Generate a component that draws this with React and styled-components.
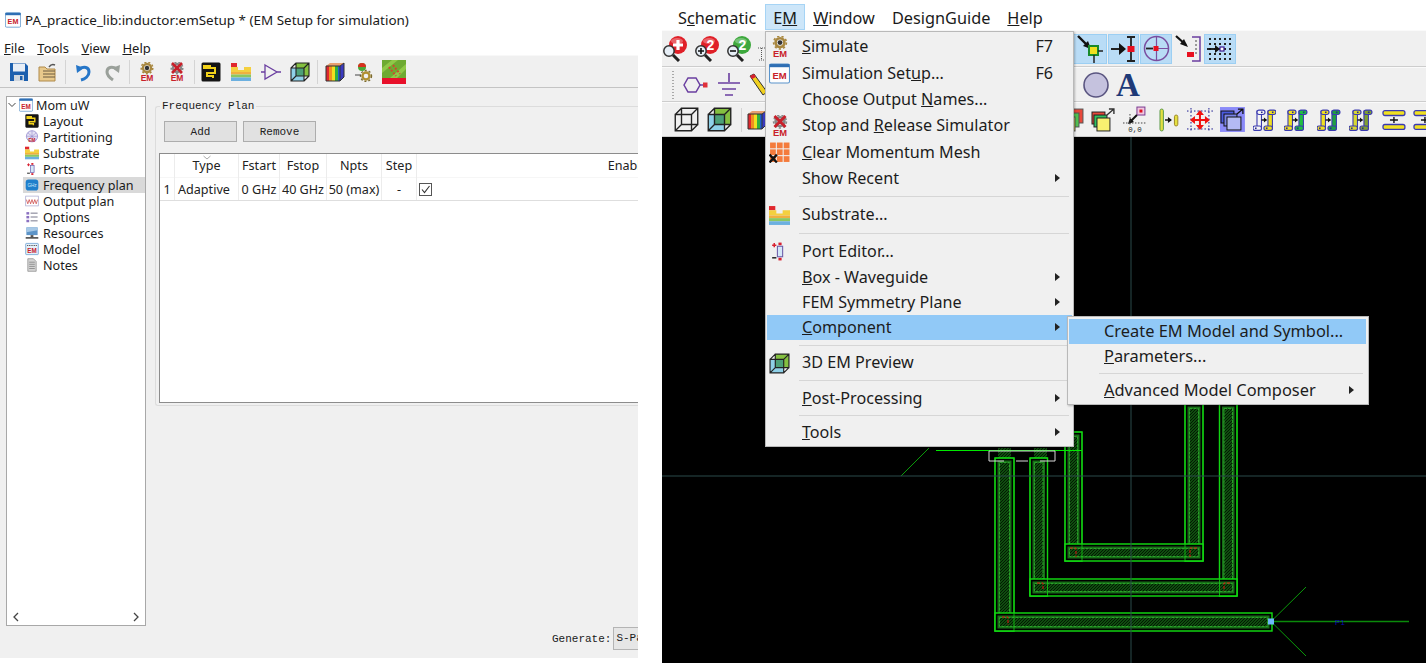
import React from 'react'
import styled, { createGlobalStyle } from 'styled-components'

const GlobalStyle = createGlobalStyle`
html, body {
  margin: 0;
  padding: 0;
  background: #fff;
  overflow: hidden;
}
#root {
  width: 1426px;
  height: 663px;
}
`

const UI_FONT = `"Noto Sans", "Open Sans", sans-serif`
const MONO_FONT = `"Liberation Mono", monospace`

const Page = styled.div`
display: flex;
width: 1426px;
height: 663px;
gap: 24px;
font-family: ${UI_FONT};
color: #1a1a1a;
overflow: hidden;
`

/* left window */
const LeftWindow = styled.div`
display: flex;
flex-direction: column;
width: 638px;
height: 658px;
overflow: hidden;
`
const TitleBar = styled.div`
display: flex;
align-items: center;
gap: 4px;
height: 40px;
padding-left: 5px;
font-size: 13.45px;
white-space: nowrap;
`
const LeftMenuBar = styled.div`
display: flex;
align-items: center;
gap: 12.5px;
height: 15px;
padding-left: 4px;
font-size: 13px;
`
const LeftToolbar = styled.div`
display: flex;
align-items: center;
height: 33px;
padding-left: 4px;
background: #f0f0f0;
border-top: 1px solid #f8f8f8;
border-bottom: 1px solid #c4c4c4;
box-sizing: border-box;
`
const ToolSlot = styled.div`
display: flex;
align-items: center;
justify-content: center;
flex: none;
width: 29.6px;
`
const ToolSep = styled.div`
flex: none;
width: 1px;
height: 24px;
margin: 0 2px;
background: #d4d4d4;
`
const Body = styled.div`
flex: 1;
display: flex;
min-height: 0;
padding: 8px 0 0 6px;
gap: 9px;
background: #f0f0f0;
`
const TreePanel = styled.div`
flex: none;
display: flex;
flex-direction: column;
width: 140px;
height: 530px;
box-sizing: border-box;
background: #fff;
border: 1px solid #a8a8a8;
font-size: 12.6px;
`
const TreeList = styled.div`
flex: 1;
`
const TreeRow = styled.div`
display: flex;
align-items: center;
height: 16px;
gap: ${({ $root }) => ($root ? 3 : 4)}px;
margin-left: ${({ $root }) => ($root ? 0 : 16)}px;
padding-left: ${({ $root }) => ($root ? 0 : 2)}px;
background: ${({ $selected }) => ($selected ? '#d9d9d9' : 'transparent')};
white-space: nowrap;
`
const TreeScroll = styled.div`
display: flex;
align-items: center;
justify-content: space-between;
height: 17px;
padding: 0 5px;
`
const Content = styled.div`
flex: 1;
min-width: 0;
display: flex;
flex-direction: column;
padding-top: 2px;
overflow: hidden;
`
const Group = styled.fieldset`
margin: 0;
height: 308px;
box-sizing: border-box;
padding: 7px 0 0 3px;
border: 1px solid #dcdcdc;
border-right: none;
border-radius: 3px 0 0 3px;
min-width: 0;
`
const GroupLabel = styled.legend`
margin-left: 1px;
padding: 0 2px;
font-family: ${MONO_FONT};
font-size: 11px;
line-height: 16px;
`
const ButtonRow = styled.div`
display: flex;
gap: 6px;
padding-left: 5px;
`
const PlanButton = styled.button`
width: 73px;
height: 21px;
padding: 0;
background: #e1e1e1;
border: 1px solid #adadad;
font-family: ${MONO_FONT};
font-size: 11px;
color: #222;
`
const TableBox = styled.div`
height: 250px;
margin-top: 11px;
box-sizing: border-box;
background: #fff;
border: 1px solid #8c8c8c;
border-right: none;
overflow: hidden;
`
const PlanTable = styled.table`
table-layout: fixed;
width: 687px;
border-collapse: collapse;
font-size: 12.6px;
color: #222;
`
const HeadCell = styled.th`
position: relative;
height: 23px;
padding: 0;
width: ${({ $w }) => $w}px;
font-weight: 400;
text-align: center;
border-right: 1px solid #ececec;
`
const SortMark = styled.svg`
position: absolute;
top: 1px;
left: 50%;
margin-left: -4px;
`
const BodyCell = styled.td`
height: 22px;
padding: 0;
text-align: center;
white-space: nowrap;
border-right: 1px solid #ececec;
border-top: 1px solid #f6f6f6;
border-bottom: 1px solid #dedede;
`
const TypeCell = styled(BodyCell)`
padding-left: 3px;
text-align: left;
`
const CheckCell = styled(BodyCell)`
padding-left: 2px;
text-align: left;
border-right: none;
`
const CheckBox = styled.span`
display: flex;
align-items: center;
justify-content: center;
width: 13px;
height: 13px;
box-sizing: border-box;
border: 1px solid #555;
`
const Footer = styled.div`
display: flex;
align-items: center;
margin-top: 221px;
margin-left: 397px;
font-family: ${MONO_FONT};
font-size: 11px;
white-space: nowrap;
`
const Select = styled.div`
flex: none;
width: 60px;
height: 23px;
margin-left: 2px;
padding-left: 2px;
box-sizing: border-box;
line-height: 21px;
background: #e6e6e6;
border: 1px solid #b4b4b4;
`

/* right window */
const RightWindow = styled.div`
position: relative;
flex: none;
display: flex;
flex-direction: column;
width: 764px;
height: 663px;
`
const RightMenuBar = styled.div`
display: flex;
align-items: flex-end;
height: 30px;
padding-left: 8px;
font-size: 16.3px;
`
const BarItem = styled.div`
display: flex;
align-items: center;
justify-content: center;
box-sizing: border-box;
height: 26px;
margin-right: ${({ $mr }) => $mr || 0}px;
padding: 1px 7px 0;
white-space: nowrap;
background: ${({ $open }) => ($open ? '#cde6f9' : 'transparent')};
border: 1px solid ${({ $open }) => ($open ? '#a6d4f5' : 'transparent')};
`
const ToolRow = styled.div`
display: flex;
align-items: center;
flex: none;
height: ${({ $h }) => $h}px;
box-sizing: border-box;
gap: ${({ $gap }) => $gap || 0}px;
background: #f0f0f0;
border-bottom: 1px solid #cdcdcd;
border-top: 1px solid #fafafa;
overflow: hidden;
`
const Spacer = styled.div`
flex: none;
width: ${({ $w }) => $w}px;
`
const ToolButton = styled.div`
display: flex;
align-items: center;
justify-content: center;
flex: none;
width: ${({ $w }) => $w}px;
height: 30px;
margin-left: ${({ $ml }) => $ml || 0}px;
box-sizing: border-box;
background: ${({ $on }) => ($on ? '#b9dcf6' : 'transparent')};
border: 1px solid ${({ $on }) => ($on ? '#9ccff3' : 'transparent')};
`
const Grip = styled.div`
flex: none;
width: 2px;
height: 28px;
margin-left: 10px;
background: repeating-linear-gradient(to bottom, #a8a8a8 0 1px, transparent 1px 3px);
`
const Canvas = styled.svg`
display: block;
flex: 1;
min-height: 0;
width: 764px;
background: #000;
`
const Menu = styled.div`
position: absolute;
left: 103px;
top: 31px;
width: 309px;
height: 416px;
box-sizing: border-box;
padding: 2px 1px 0;
background: #f0f0f0;
border: 1px solid #b9b9b9;
box-shadow: 1px 1px 2px rgba(0, 0, 0, 0.25);
font-size: 16.15px;
color: #1c1c1c;
`
const SubMenu = styled(Menu)`
left: 301px;
top: 284px;
width: 302px;
height: 89px;
padding: 2px 2px 0 1px;
font-size: 16.4px;
`
const MenuRow = styled.div`
display: grid;
grid-template-columns: ${({ $icon }) => $icon}px 1fr auto 12px;
align-items: center;
box-sizing: border-box;
height: ${({ $h }) => $h}px;
padding-right: ${({ $pr }) => $pr}px;
padding-bottom: 2px;
background: ${({ $active }) => ($active ? '#91c9f7' : 'transparent')};
white-space: nowrap;
`
const RowIcon = styled.div`
display: flex;
align-items: center;
margin-top: 2px;
padding-left: 2px;
`
const Shortcut = styled.span`
margin-right: -2px;
`
const Arrow = styled.span`
justify-self: center;
width: 0;
height: 0;
border-top: 4px solid transparent;
border-bottom: 4px solid transparent;
border-left: 5px solid #222;
`
const MenuSep = styled.div`
height: 1px;
margin: ${({ $t }) => $t}px 3px ${({ $b }) => $b}px ${({ $l }) => $l || 32}px;
background: #d6d6d6;
`
const BigA = styled.span`
font-family: "Liberation Serif", serif;
font-size: 33px;
font-weight: 700;
line-height: 30px;
color: #1e3a78;
`

/* "&" marks the letter a menu underlines */
const Mn = ({ t }) => {
    const i = t.indexOf('&')
    if (i < 0) return <span>{t}</span>
    return <span>{t.slice(0, i)}<u>{t[i + 1]}</u>{t.slice(i + 2)}</span>
}

const Ico = ({ s = 20, children }) => (
    <svg width={s} height={s} viewBox="0 0 20 20" style={{ display: 'block', flex: 'none' }}>{children}</svg>
)

const EmLetters = ({ y = 19, size = 8.5, fill = '#c8202a', x = 10 }) => (
    <text x={x} y={y} textAnchor="middle" fontFamily="Liberation Sans, sans-serif" fontWeight="700" fontSize={size} fill={fill}>EM</text>
)
const Gear = ({ cx = 10, cy = 6, r = 4, c = '#a8873f' }) => (
    <g>
        <circle cx={cx} cy={cy} r={r} fill="none" stroke={c} strokeWidth="2.4" />
        <circle cx={cx} cy={cy} r={r + 1.8} fill="none" stroke={c} strokeWidth="1.5" strokeDasharray="2 2" />
        <circle cx={cx} cy={cy} r={r - 1.8} fill="#333" />
    </g>
)
const SaveIcon = () => (
    <Ico>
        <path d="M1 1h15l3 3v15H1z" fill="#1c5fae" />
        <rect x="4" y="1.5" width="12" height="8" fill="#e8eef6" />
        <rect x="5" y="13" width="10" height="6" fill="#cfd6de" />
        <rect x="11" y="14" width="2.5" height="4" fill="#1c5fae" />
    </Ico>
)
const OpenIcon = () => (
    <Ico>
        <path d="M1 5h6l2 2h8v12H1z" fill="#e8c98c" stroke="#b08a4a" />
        <path d="M5 9h12M5 12h12M5 15h12" stroke="#6a5a40" />
        <path d="M11 5c2-3 4-3 6-2" fill="none" stroke="#555" strokeWidth="1.4" />
    </Ico>
)
const UndoIcon = () => (
    <Ico>
        <path d="M3 3l1 8 7-5z" fill="#2676c8" />
        <path d="M6 7c5-3 10-2 10 3 0 4-4 7-8 8" fill="none" stroke="#2676c8" strokeWidth="3" />
    </Ico>
)
const RedoIcon = () => (
    <Ico>
        <path d="M17 3l-1 8-7-5z" fill="#9aa09a" />
        <path d="M14 7C9 4 4 5 4 10c0 4 3 6 6 8" fill="none" stroke="#9aa09a" strokeWidth="3" />
    </Ico>
)
const EmGearIcon = ({ s }) => (
    <Ico s={s}><Gear /><EmLetters /></Ico>
)
const EmStopIcon = ({ s }) => (
    <Ico s={s}>
        <Gear c="#888" />
        <path d="M5 1l10 10M15 1L5 11" stroke="#c8202a" strokeWidth="2.6" />
        <EmLetters />
    </Ico>
)
const LayoutIcon = ({ s }) => (
    <Ico s={s}>
        <rect x="0.5" y="0.5" width="19" height="19" rx="1.5" fill="#141414" />
        <path d="M3 4h6v2H3zM9 6h5v5H6v3h6v2" fill="none" stroke="#f2d21a" strokeWidth="2" />
    </Ico>
)
const SubstrateIcon = ({ s }) => (
    <Ico s={s}>
        <rect x="0" y="1" width="6" height="4" fill="#e0282e" />
        <path d="M0 5h7v3h6V5h7v5H0z" fill="#f4d03f" />
        <rect x="0" y="10" width="20" height="2.5" fill="#f0b040" />
        <rect x="0" y="12.5" width="20" height="3" fill="#8cc860" />
        <rect x="0" y="15.5" width="20" height="3.5" fill="#6cb0e0" />
    </Ico>
)
const TriangleIcon = () => (
    <Ico>
        <path d="M4 3l12 7-12 7zM0 10h4M16 10h4" fill="none" stroke="#6a3ea0" strokeWidth="1.3" />
    </Ico>
)
const BoxIcon = ({ s, fill }) => (
    <Ico s={s}>
        {fill && <path d="M1 6h13v13H1z" fill="#8ed0e8" />}
        {fill && <path d="M6 1h13v13H6z" fill="#84c040" />}
        {fill && <path d="M6 6h8v8H6z" fill="#4ca078" />}
        <path d="M1 6h13v13H1zM6 1h13v13H6zM1 6l5-5M14 6l5-5M1 19l5-5M14 19l5-5" fill="none" stroke="#222" strokeWidth="1.1" />
    </Ico>
)
const RainbowIcon = () => (
    <Ico>
        <rect x="1" y="4" width="3" height="15" fill="#e0282e" />
        <rect x="4" y="4" width="3" height="15" fill="#f09020" />
        <rect x="7" y="4" width="3" height="15" fill="#f0e020" />
        <rect x="10" y="4" width="3" height="15" fill="#30b040" />
        <rect x="13" y="4" width="2" height="15" fill="#2060d0" />
        <path d="M15 4l4-3v14l-4 4z" fill="#3a3ac0" />
        <path d="M1 4l4-3h14l-4 3z" fill="#e8a070" />
        <path d="M1 4h14v15H1zM15 4l4-3v14l-4 4" fill="none" stroke="#333" />
    </Ico>
)
const BulbGearIcon = () => (
    <Ico>
        <circle cx="8" cy="5" r="4" fill="#4aa838" />
        <path d="M4 5a4 4 0 0 1 8 0z" fill="#d83020" />
        <circle cx="12" cy="14" r="3.5" fill="none" stroke="#b09030" strokeWidth="2.4" />
        <circle cx="12" cy="14" r="5.5" fill="none" stroke="#7a6a30" strokeWidth="1.4" strokeDasharray="2 2" />
        <path d="M1 13h6" stroke="#444" />
    </Ico>
)
const PhotoIcon = () => (
    <svg width="24" height="24" viewBox="0 0 24 24" style={{ display: 'block', flex: 'none' }}>
        <rect width="24" height="18" fill="#6eaa32" />
        <path d="M0 8L10 0h6L0 13zM8 18L24 4v5L15 18z" fill="#90c848" />
        <path d="M7 7l7 9M11 5l7 9" stroke="#d04830" strokeWidth="2" strokeDasharray="2 1.5" />
        <rect y="18" width="24" height="6" fill="#e8102a" />
    </svg>
)
const EmWinIcon = ({ s }) => (
    <Ico s={s}>
        <rect x="0.5" y="1" width="19" height="18" rx="1.5" fill="#fdfdfd" stroke="#5a94cc" />
        <rect x="0.5" y="1" width="19" height="3" fill="#2f6fb4" />
        <EmLetters y="15" size="9" />
    </Ico>
)
const MeshIcon = ({ s }) => (
    <Ico s={s}>
        {[1, 7.5, 14].map(x => [0.5, 7, 13.5].map(y => <rect key={`${x}${y}`} x={x} y={y} width="5.5" height="5.5" fill="#f47b3c" />))}
        <path d="M0.5 12l7 7.5M7.5 12l-7 7.5" stroke="#111" strokeWidth="2.2" />
    </Ico>
)
const PortIcon = ({ s }) => (
    <Ico s={s}>
        <rect x="8" y="5" width="5" height="10" fill="#d5e8f8" stroke="#6a5aa8" />
        <rect x="9" y="1.5" width="3" height="2.5" fill="#d82030" />
        <rect x="9" y="16" width="3" height="2.5" fill="#d82030" />
        <path d="M3 4h4M5 2v4" stroke="#d82030" strokeWidth="1.4" />
        <path d="M3 16h4" stroke="#222" strokeWidth="1.4" />
    </Ico>
)
const PartitionIcon = ({ s }) => (
    <Ico s={s}>
        <circle cx="10" cy="9" r="8" fill="#e2e0f4" stroke="#8a80c8" />
        <path d="M2 9h16M10 1v16M4 4l12 10M16 4L4 14" stroke="#8a80c8" strokeWidth="0.7" />
        <EmLetters y="17" size="6.5" />
    </Ico>
)
const GhzIcon = ({ s }) => (
    <Ico s={s}>
        <rect x="1" y="2" width="18" height="16" rx="4" fill="#1f7fcc" />
        <text x="10" y="13" textAnchor="middle" fontFamily="Liberation Sans, sans-serif" fontSize="6.6" fill="#cfe8fa">GHz</text>
    </Ico>
)
const OutputIcon = ({ s }) => (
    <Ico s={s}>
        <rect x="1" y="3" width="18" height="14" fill="#fff" stroke="#a6a6cf" />
        <path d="M2 8l2 6 2-6 2 6 2-6 2 6 2-6 2 6 2-6" fill="none" stroke="#c83a3a" />
    </Ico>
)
const OptionsIcon = ({ s }) => (
    <Ico s={s}>
        {[3, 8.5, 14].map(y => <rect key={y} x="2" y={y} width="4" height="3.5" fill="#8a70c0" />)}
        <path d="M8 4.5h10M8 10h10M8 15.5h10" stroke="#6a6a80" strokeWidth="1.3" />
    </Ico>
)
const ResourcesIcon = ({ s }) => (
    <Ico s={s}>
        <rect x="2" y="2" width="16" height="11" fill="#5c94c8" />
        <path d="M2 2h16v4L2 9z" fill="#a6c8e6" />
        <rect x="8" y="13" width="4" height="3" fill="#555" />
        <rect x="1" y="16" width="18" height="2" fill="#333" />
    </Ico>
)
const ModelIcon = ({ s }) => (
    <Ico s={s}>
        <rect x="1" y="2" width="18" height="16" rx="1" fill="#e4f1fb" stroke="#5a94cc" />
        <path d="M3 5h14" stroke="#555" strokeDasharray="1.5 1" strokeWidth="1.6" />
        <EmLetters y="16" size="9" />
    </Ico>
)
const NotesIcon = ({ s }) => (
    <Ico s={s}>
        <path d="M4 1h8l4 4v14H4z" fill="#d4d4d4" stroke="#8a8a8a" />
        <path d="M6 6h8M6 9h8M6 12h8M6 15h8" stroke="#777" />
    </Ico>
)
const ZoomIcon = ({ ball, label, sign }) => (
    <svg width="25" height="26" viewBox="0 0 25 26" style={{ display: 'block' }}>
        <circle cx="16" cy="9" r="9" fill={ball} />
        <ellipse cx="15" cy="5" rx="6" ry="3" fill="#fff" opacity="0.3" />
        {label
            ? <text x="16.5" y="14" textAnchor="middle" fontFamily="Liberation Sans, sans-serif" fontWeight="700" fontSize="14" fill="#fff">{label}</text>
            : <path d="M11 9h10M16 4v10" stroke="#fff" strokeWidth="3.2" />}
        <circle cx="7" cy="15" r="5.2" fill="#e6eef6" stroke="#333" strokeWidth="1.5" />
        {sign && <path d={sign === '+' ? 'M4 15h6M7 12v6' : 'M4 15h6'} stroke="#111" strokeWidth="1.6" />}
        <path d="M11 19l6 6" stroke="#222" strokeWidth="3" />
    </svg>
)
const DottedTee = () => (
    <svg width="7" height="14" viewBox="0 0 7 14" style={{ display: 'block', marginTop: 10 }}>
        <path d="M0 1h7M3.5 1v12M1 13h5" stroke="#555" strokeDasharray="1 1" />
    </svg>
)
const HexPortIcon = () => (
    <svg width="26" height="20" viewBox="0 0 26 20" style={{ display: 'block' }}>
        <path d="M2 10l4-7h8l4 7-4 7H6z" fill="none" stroke="#6a3ea0" strokeWidth="1.5" />
        <path d="M18 10h4" stroke="#6a3ea0" strokeWidth="1.5" />
        <rect x="21" y="7.5" width="4.5" height="5" fill="#e0303a" />
    </svg>
)
const GroundIcon = () => (
    <svg width="22" height="24" viewBox="0 0 22 24" style={{ display: 'block' }}>
        <path d="M11 0v9M0 10h22M4 16h14M7 22h8" stroke="#6a3ea0" strokeWidth="1.6" />
    </svg>
)
const PencilIcon = () => (
    <svg width="18" height="24" viewBox="0 0 18 24" style={{ display: 'block' }}>
        <path d="M1 3l4-2 13 18-4 3z" fill="#f0d020" stroke="#333" />
        <path d="M1 3l4-2 2 3-4 2z" fill="#d82030" />
    </svg>
)
const CircleIcon = () => (
    <svg width="26" height="26" viewBox="0 0 26 26" style={{ display: 'block' }}>
        <circle cx="13" cy="13" r="12" fill="#c5c2de" stroke="#5a5580" strokeWidth="1.6" />
    </svg>
)
const ArrowInIcon = () => (
    <svg width="26" height="28" viewBox="0 0 26 28" style={{ display: 'block' }}>
        <path d="M1 1l12 12" stroke="#111" strokeWidth="2.4" />
        <path d="M14 14L6 11l5-5z" fill="#111" />
        <rect x="12" y="11" width="9" height="9" fill="#f0e020" stroke="#1a8a2a" strokeWidth="2" />
        <path d="M21 16h5M17 20v8" stroke="#222" strokeWidth="1.5" />
    </svg>
)
const ArrowBarIcon = () => (
    <svg width="26" height="26" viewBox="0 0 26 26" style={{ display: 'block' }}>
        <path d="M0 13h10M20 1v24M16 1h8M16 25h8" stroke="#222" strokeWidth="1.8" />
        <path d="M15 13l-7-6v12z" fill="#111" />
        <rect x="16.5" y="10" width="7" height="6" fill="#e81020" />
    </svg>
)
const CrossCircleIcon = () => (
    <svg width="27" height="27" viewBox="0 0 27 27" style={{ display: 'block' }}>
        <circle cx="13.5" cy="13.5" r="12" fill="none" stroke="#7a4ea0" strokeWidth="1.5" />
        <path d="M13.5 1.5v24M14 13.5h11" stroke="#7a4ea0" strokeWidth="1.2" />
        <path d="M3 13.5h7" stroke="#222" strokeWidth="1.8" />
        <rect x="10.5" y="11" width="5" height="5" fill="#e81020" />
    </svg>
)
const ArrowEdgeIcon = () => (
    <svg width="26" height="28" viewBox="0 0 26 28" style={{ display: 'block' }}>
        <path d="M1 1l10 9" stroke="#111" strokeWidth="2.2" />
        <path d="M13 12L5 9l4-5z" fill="#111" />
        <path d="M17 2h8v24h-8" fill="none" stroke="#6a3ea0" strokeWidth="1.5" />
        <path d="M21 5v14" stroke="#444" strokeDasharray="2 2" />
        <rect x="12" y="17" width="7" height="5" fill="#e81020" />
    </svg>
)
const SnapGridIcon = () => (
    <svg width="26" height="26" viewBox="0 0 26 26" style={{ display: 'block' }}>
        {[2, 7, 12, 17, 22].map(x => [2, 7, 12, 17, 22].map(y => <rect key={`${x}-${y}`} x={x} y={y} width="2" height="2" fill="#222" />))}
        <path d="M0 13h10" stroke="#111" strokeWidth="1.8" />
        <path d="M13 13l-5-4v8z" fill="#111" />
        <rect x="13" y="11" width="4" height="4" fill="#fff" stroke="#3a1a90" strokeWidth="1.2" />
    </svg>
)
const StackIcon = ({ w = 12 }) => (
    <svg width={w} height="24" viewBox={`${24 - w} 0 ${w} 24`} style={{ display: 'block' }}>
        <rect x="8" y="1" width="15" height="14" fill="#e8483a" stroke="#555" />
        <rect x="4" y="5" width="15" height="14" fill="#50c050" stroke="#555" />
        <rect x="0" y="9" width="15" height="14" fill="#f0d850" stroke="#555" />
    </svg>
)
const LayersIcon = () => (
    <svg width="24" height="24" viewBox="0 0 24 24" style={{ display: 'block' }}>
        <rect x="1" y="4" width="13" height="12" fill="#e8483a" stroke="#222" />
        <rect x="3" y="7" width="13" height="12" fill="#30c060" stroke="#222" />
        <rect x="6" y="10" width="13" height="13" fill="#f8f070" stroke="#222" />
        <path d="M16 7l7-6M18 1h5v5" fill="none" stroke="#333" strokeWidth="1.4" />
    </svg>
)
const OriginIcon = () => (
    <svg width="24" height="28" viewBox="0 0 24 28" style={{ display: 'block' }}>
        <rect x="14" y="1" width="8" height="8" fill="#f0c8e0" stroke="#7a3a90" />
        <rect x="16.5" y="3.5" width="3" height="3" fill="#e01020" />
        <path d="M14 9l-7 7" stroke="#111" strokeWidth="2" />
        <path d="M5 18l2-6 4 4z" fill="#111" />
        <path d="M0 17h24M7 8v12" stroke="#444" strokeDasharray="1.5 1.5" />
        <text x="12" y="26" textAnchor="middle" fontFamily="Liberation Mono, monospace" fontSize="7.5" fill="#222">0,0</text>
    </svg>
)
const PinMoveIcon = () => (
    <svg width="21" height="24" viewBox="0 0 21 24" style={{ display: 'block' }}>
        <rect x="2" y="1" width="3.4" height="22" rx="1.7" fill="#e4e040" stroke="#5a9a4a" />
        <rect x="16.5" y="7" width="3.4" height="11" rx="1.7" fill="#e4e040" stroke="#a08a2a" />
        <path d="M7 12h6" stroke="#111" strokeWidth="1.5" />
        <path d="M14 12l-4-3v6z" fill="#111" />
    </svg>
)
const ExpandIcon = () => (
    <svg width="26" height="24" viewBox="0 0 26 24" style={{ display: 'block' }}>
        <path d="M0 3h26M0 21h26M4 0v24M22 0v24" stroke="#1a1a90" strokeDasharray="1.5 2" />
        <path d="M5 12h16M13 4v16" stroke="#f01010" strokeWidth="2" />
        <path d="M3 12l5-4v8zM23 12l-5-4v8zM13 2l-4 5h8zM13 22l-4-5h8z" fill="#f01010" />
    </svg>
)
const FrontIcon = () => (
    <svg width="25" height="25" viewBox="0 0 25 25" style={{ display: 'block' }}>
        <rect width="25" height="25" fill="#8a8af8" />
        <rect x="1" y="4" width="13" height="12" fill="#4a5ae0" stroke="#111" />
        <rect x="4" y="7" width="13" height="12" fill="#7a84e8" stroke="#111" />
        <rect x="7" y="10" width="14" height="13" fill="#b4baf4" stroke="#111" />
        <path d="M17 7l6-5M18 2h5v5" fill="none" stroke="#111" strokeWidth="1.3" />
    </svg>
)
/* one conductor: head top right, foot bottom left */
const Conductor = ({ x, fill }) => (
    <g>
        <rect x={x + 1} y="2" width="4.5" height="18" fill={fill} stroke="#3a3ab0" strokeWidth="1.1" />
        <rect x={x + 1} y="1" width="8" height="4.5" rx="2" fill={fill} stroke="#3a3ab0" strokeWidth="1.2" />
        <rect x={x - 3} y="17" width="8.5" height="4.5" rx="2" fill={fill} stroke="#3a3ab0" strokeWidth="1.2" />
        <rect x={x + 5} y="2.5" width="1.6" height="1.6" fill="#2a2a90" />
        <rect x={x - 1} y="18.5" width="1.6" height="1.6" fill="#2a2a90" />
    </g>
)
const AlignIcon = ({ left = '#f0e020', right = '#f0e020' }) => (
    <svg width="24" height="22" viewBox="0 0 24 22" style={{ display: 'block' }}>
        <Conductor x={3} fill={left} />
        <Conductor x={14} fill={right} />
        <path d="M8.5 11h5" stroke="#111" strokeWidth="1.4" />
        <path d="M14 11l-3-2.4v4.8z" fill="#111" />
    </svg>
)
const StackBarIcon = ({ w = 24 }) => (
    <svg width={w} height="22" viewBox={`0 0 ${w} 22`} style={{ display: 'block' }}>
        <rect x="1" y="1.5" width="22" height="5" rx="2" fill="#f0e020" stroke="#3a3ab0" strokeWidth="1.3" />
        <rect x="1" y="15.5" width="22" height="5" rx="2" fill="#f0e020" stroke="#3a3ab0" strokeWidth="1.3" />
        <path d="M12 8v6M8 11h8" stroke="#111" strokeWidth="1.4" />
    </svg>
)

const treeItems = [
    ['Layout', LayoutIcon],
    ['Partitioning', PartitionIcon],
    ['Substrate', SubstrateIcon],
    ['Ports', PortIcon],
    ['Frequency plan', GhzIcon, true],
    ['Output plan', OutputIcon],
    ['Options', OptionsIcon],
    ['Resources', ResourcesIcon],
    ['Model', ModelIcon],
    ['Notes', NotesIcon],
]

const menuBlocks = [
    [
        { label: '&Simulate', key: 'F7', icon: <EmGearIcon s={22} /> },
        { label: 'Simulation Set&up...', key: 'F6', icon: <EmWinIcon s={21} /> },
        { label: 'Choose Output &Names...' },
        { label: 'Stop and &Release Simulator', icon: <EmStopIcon s={22} /> },
        { label: '&Clear Momentum Mesh', icon: <MeshIcon s={21} /> },
        { label: 'Show Recent', sub: true },
    ],
    [{ label: 'Substrate...', icon: <SubstrateIcon s={21} /> }],
    [
        { label: 'Port Editor...', icon: <PortIcon s={21} /> },
        { label: '&Box - Waveguide', sub: true },
        { label: 'FEM Symmetry Plane', sub: true, h: 24 },
        { label: '&Component', sub: true, h: 25, active: true },
    ],
    [{ label: '3D EM Preview', icon: <BoxIcon s={21} fill /> }],
    [{ label: '&Post-Processing', sub: true }],
    [{ label: '&Tools', sub: true }],
]
const sepMargins = [[3.6, 5], [4.5, 4.5], [4.5, 4.5], [3.5, 4.5], [3.5, 3.5]]

const verticals = [
    [995, 458, 19, 173], [1030, 458, 17.5, 138], [1065, 432, 17, 129],
    [1185, 404, 18, 157], [1219.5, 404, 17.5, 192],
]
const horizontals = [
    [995, 613, 277, 18], [1030, 579, 207, 17], [1065, 544, 138, 17],
]
const cornerMarks = [
    'M1002 617h6v8', 'M1037 583h6v7', 'M1230 583h-6v8', 'M1070 548h6v9', 'M1197 548h-7v9',
]

const Trace = ({ x, y, w, h }) => (
    <g>
        <rect x={x} y={y} width={w} height={h} fill="#000" stroke="#12e012" strokeWidth="1.4" />
        <rect x={x + 2.5} y={y + 2.5} width={w - 5} height={h - 5} fill="#176f17" />
        <rect x={x + 4.5} y={y + 4.5} width={w - 9} height={h - 9} fill="url(#metal)" stroke="#2aa02a" strokeWidth="1" strokeDasharray="3 1" />
    </g>
)

const App = () => (
    <Page>
        <GlobalStyle />
        <LeftWindow>
            <TitleBar>
                <EmWinIcon s={16} />
                PA_practice_lib:inductor:emSetup * (EM Setup for simulation)
            </TitleBar>
            <LeftMenuBar>
                {['&File', '&Tools', '&View', '&Help'].map(t => <Mn key={t} t={t} />)}
            </LeftMenuBar>
            <LeftToolbar>
                <ToolSlot><SaveIcon /></ToolSlot>
                <ToolSlot><OpenIcon /></ToolSlot>
                <ToolSep />
                <ToolSlot><UndoIcon /></ToolSlot>
                <ToolSlot><RedoIcon /></ToolSlot>
                <ToolSep />
                <ToolSlot><EmGearIcon /></ToolSlot>
                <ToolSlot><EmStopIcon /></ToolSlot>
                <ToolSep />
                <ToolSlot><LayoutIcon /></ToolSlot>
                <ToolSlot><SubstrateIcon /></ToolSlot>
                <ToolSlot><TriangleIcon /></ToolSlot>
                <ToolSlot><BoxIcon fill /></ToolSlot>
                <ToolSep />
                <ToolSlot><RainbowIcon /></ToolSlot>
                <ToolSlot><BulbGearIcon /></ToolSlot>
                <ToolSlot><PhotoIcon /></ToolSlot>
            </LeftToolbar>
            <Body>
                <TreePanel>
                    <TreeList>
                        <TreeRow $root>
                            <svg width="8" height="8" viewBox="0 0 8 8" style={{ marginLeft: 1 }}><path d="M0.5 2l3.5 3.5L7.5 2" fill="none" stroke="#444" /></svg>
                            <EmWinIcon s={14} />
                            Mom uW
                        </TreeRow>
                        {treeItems.map(([name, Icon, selected]) => (
                            <TreeRow key={name} $selected={selected}>
                                <Icon s={14} />
                                {name}
                            </TreeRow>
                        ))}
                    </TreeList>
                    <TreeScroll>
                        <svg width="7" height="10" viewBox="0 0 7 10"><path d="M6 1L2 5l4 4" fill="none" stroke="#444" strokeWidth="1.3" /></svg>
                        <svg width="7" height="10" viewBox="0 0 7 10"><path d="M1 1l4 4-4 4" fill="none" stroke="#444" strokeWidth="1.3" /></svg>
                    </TreeScroll>
                </TreePanel>
                <Content>
                    <Group>
                        <GroupLabel>Frequency Plan</GroupLabel>
                        <ButtonRow>
                            <PlanButton>Add</PlanButton>
                            <PlanButton>Remove</PlanButton>
                        </ButtonRow>
                        <TableBox>
                            <PlanTable>
                                <thead>
                                    <tr>
                                        <HeadCell $w={14} />
                                        <HeadCell $w={63}>
                                            <SortMark width="8" height="5" viewBox="0 0 8 5"><path d="M0.5 1L4 4l3.5-3" fill="none" stroke="#aaa" /></SortMark>
                                            Type
                                        </HeadCell>
                                        <HeadCell $w={40}>Fstart</HeadCell>
                                        <HeadCell $w={46}>Fstop</HeadCell>
                                        <HeadCell $w={54}>Npts</HeadCell>
                                        <HeadCell $w={34}>Step</HeadCell>
                                        <HeadCell $w={429}>Enabled</HeadCell>
                                    </tr>
                                </thead>
                                <tbody>
                                    <tr>
                                        <BodyCell>1</BodyCell>
                                        <TypeCell>Adaptive</TypeCell>
                                        <BodyCell>0 GHz</BodyCell>
                                        <BodyCell>40 GHz</BodyCell>
                                        <BodyCell>50 (max)</BodyCell>
                                        <BodyCell>-</BodyCell>
                                        <CheckCell>
                                            <CheckBox>
                                                <svg width="11" height="11" viewBox="0 0 11 11"><path d="M2 5.5l2.5 3L9.5 2" fill="none" stroke="#333" strokeWidth="1.1" /></svg>
                                            </CheckBox>
                                        </CheckCell>
                                    </tr>
                                </tbody>
                            </PlanTable>
                        </TableBox>
                    </Group>
                    <Footer>
                        Generate:
                        <Select>S-Parameters</Select>
                    </Footer>
                </Content>
            </Body>
        </LeftWindow>

        <RightWindow>
            <RightMenuBar>
                <BarItem $mr={1}><Mn t="S&chematic" /></BarItem>
                <BarItem $open><Mn t="E&M" /></BarItem>
                <BarItem $mr={1}><Mn t="&Window" /></BarItem>
                <BarItem $mr={1}><Mn t="DesignGuide" /></BarItem>
                <BarItem><Mn t="&Help" /></BarItem>
            </RightMenuBar>
            <ToolRow $h={37} $gap={7}>
                <ZoomIcon ball="#e02028" />
                <ZoomIcon ball="#e02028" label="2" sign="+" />
                <ZoomIcon ball="#3ca83c" label="2" sign="-" />
                <DottedTee />
                <Spacer $w={294} />
                <ToolButton $on $w={34}><ArrowInIcon /></ToolButton>
                <ToolButton $on $w={31} $ml={-6}><ArrowBarIcon /></ToolButton>
                <ToolButton $on $w={32} $ml={-6}><CrossCircleIcon /></ToolButton>
                <ToolButton $w={28} $ml={-5}><ArrowEdgeIcon /></ToolButton>
                <ToolButton $on $w={32} $ml={-5}><SnapGridIcon /></ToolButton>
            </ToolRow>
            <ToolRow $h={35}>
                <Grip />
                <Spacer $w={8} />
                <HexPortIcon />
                <Spacer $w={10} />
                <GroundIcon />
                <Spacer $w={9} />
                <PencilIcon />
                <Spacer $w={316} />
                <CircleIcon />
                <Spacer $w={7} />
                <BigA>A</BigA>
            </ToolRow>
            <ToolRow $h={35}>
                <Spacer $w={12} />
                <BoxIcon s={25} />
                <Spacer $w={8} />
                <BoxIcon s={25} fill />
                <Spacer $w={7} />
                <ToolSep />
                <Spacer $w={3} />
                <RainbowIcon />
                <Spacer $w={305} />
                <StackIcon />
                <Spacer $w={7} />
                <LayersIcon />
                <Spacer $w={8} />
                <OriginIcon />
                <Spacer $w={11} />
                <PinMoveIcon />
                <Spacer $w={8} />
                <ExpandIcon />
                <Spacer $w={7} />
                <FrontIcon />
                <Spacer $w={8} />
                <AlignIcon left="#f4f4f4" />
                <Spacer $w={8} />
                <AlignIcon right="#20c040" />
                <Spacer $w={9} />
                <AlignIcon right="#20a040" />
                <Spacer $w={8} />
                <AlignIcon left="#d8d830" right="#80a030" />
                <Spacer $w={9} />
                <StackBarIcon />
                <Spacer $w={7} />
                <StackBarIcon w={13} />
            </ToolRow>
            <Canvas viewBox="662 137 764 526">
                <defs>
                    <pattern id="metal" width="3" height="3" patternUnits="userSpaceOnUse">
                        <rect width="3" height="3" fill="#146414" />
                        <path d="M0 3L3 0M-1 1L1 -1M2 4L4 2" stroke="#021402" strokeWidth="1.1" />
                    </pattern>
                </defs>
                <path d="M929 448L901 476" stroke="#0a9a0a" />
                <rect x="998" y="448" width="13" height="10" fill="url(#metal)" />
                <rect x="1034" y="448" width="13" height="10" fill="url(#metal)" />
                {verticals.map(([x, y, w, h]) => <Trace key={`${x}-${y}`} x={x} y={y} w={w} h={h} />)}
                {horizontals.map(([x, y, w, h]) => <Trace key={`${x}-${y}`} x={x} y={y} w={w} h={h} />)}
                {verticals.map(([x, y, w, h]) => <rect key={`${x}-${y}`} x={x} y={y} width={w} height={h} fill="none" stroke="#12d012" strokeWidth="0.8" />)}
                <path d="M1131 137V663M662 476H1426" stroke="#2b4a4a" strokeWidth="1" />
                <path d="M936 450.5H1082" stroke="#00e800" />
                <path d="M989 461V451H1055V461H1040M1028 461H1016M1004 461H989" fill="none" stroke="#d8d8d8" />
                {cornerMarks.map(d => <path key={d} d={d} fill="none" stroke="#e01010" strokeDasharray="3 1.5" />)}
                <path d="M1271 621.5H1409" stroke="#0a8a0a" strokeWidth="1.6" />
                <path d="M1271 621.5L1306 587M1271 621.5L1306 656" stroke="#0a9a0a" />
                <rect x="1268" y="618.5" width="6" height="6" fill="#6cb8f8" />
                <text x="1340" y="625" textAnchor="middle" fontFamily="Liberation Sans, sans-serif" fontSize="8" fill="#0a0ab0">P1</text>
            </Canvas>

            <Menu>
                {menuBlocks.map((block, i) => (
                    <React.Fragment key={i}>
                        {block.map(item => (
                            <MenuRow key={item.label} $icon={35} $pr={9} $h={item.h || 26.4} $active={item.active}>
                                <RowIcon>{item.icon}</RowIcon>
                                <Mn t={item.label} />
                                {item.key ? <Shortcut>{item.key}</Shortcut> : <span />}
                                {item.sub ? <Arrow /> : <span />}
                            </MenuRow>
                        ))}
                        {sepMargins[i] && <MenuSep $t={sepMargins[i][0]} $b={sepMargins[i][1]} />}
                    </React.Fragment>
                ))}
                <SubMenu>
                    <MenuRow $icon={35} $pr={8} $h={25} $active>
                        <span />
                        <Mn t="Create EM Model and Symbol..." />
                    </MenuRow>
                    <MenuRow $icon={35} $pr={8} $h={25}>
                        <span />
                        <Mn t="&Parameters..." />
                    </MenuRow>
                    <MenuSep $t={4} $b={4} $l={30} />
                    <MenuRow $icon={35} $pr={9} $h={25}>
                        <span />
                        <Mn t="&Advanced Model Composer" />
                        <span />
                        <Arrow />
                    </MenuRow>
                </SubMenu>
            </Menu>
        </RightWindow>
    </Page>
)

export default App
